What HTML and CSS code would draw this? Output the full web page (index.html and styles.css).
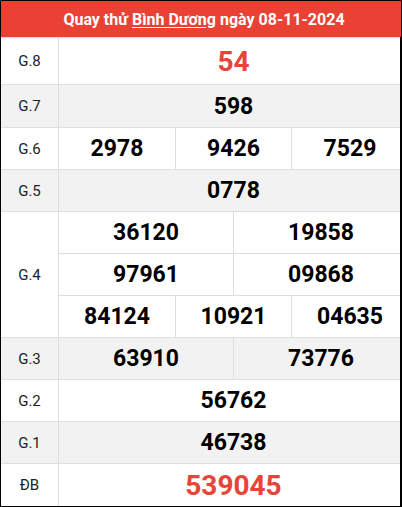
FILE: index.html
```html
<!DOCTYPE html>
<html lang="vi">
<head>
<meta charset="utf-8">
<link rel="stylesheet" href="styles.css">
</head>
<body>
<div class="board">
  <div class="title">Quay thử <span class="u">Bình Dương</span> ngày 08-11-2024</div>
  <div class="grid">
    <div class="lbl">G.8</div>
    <div class="val full red big">54</div>

    <div class="lbl alt">G.7</div>
    <div class="val full alt">598</div>

    <div class="lbl">G.6</div>
    <div class="val t1">2978</div>
    <div class="val t2">9426</div>
    <div class="val t3">7529</div>

    <div class="lbl alt">G.5</div>
    <div class="val full alt">0778</div>

    <div class="lbl g4">G.4</div>
    <div class="val h1">36120</div>
    <div class="val h2">19858</div>
    <div class="val h1">97961</div>
    <div class="val h2">09868</div>
    <div class="val t1">84124</div>
    <div class="val t2">10921</div>
    <div class="val t3">04635</div>

    <div class="lbl alt">G.3</div>
    <div class="val h1 alt">63910</div>
    <div class="val h2 alt">73776</div>

    <div class="lbl">G.2</div>
    <div class="val full">56762</div>

    <div class="lbl alt">G.1</div>
    <div class="val full alt">46738</div>

    <div class="lbl">ĐB</div>
    <div class="val full red big">539045</div>
  </div>
</div>
</body>
</html>
```
FILE: styles.css
```css
* { box-sizing: border-box; }
html, body { margin: 0; padding: 0; background: #fff; }
.board {
  width: 402px;
  height: 507px;
  border: 1px solid #000;
  font-family: Roboto, "Liberation Sans", Arial, sans-serif;
  overflow: hidden;
}
.title {
  height: 36px;
  padding-left: 6px;
  background: #e94235;
  color: #fff;
  font-weight: 700;
  font-size: 16px;
  display: flex;
  align-items: center;
  justify-content: center;
}
.u { text-decoration: underline; text-underline-offset: 2px; margin: 0 4px; }
.grid {
  display: grid;
  grid-template-columns: 57px 58px 57px 57px 57px 54px 53px;
  grid-template-rows: 46px 42px 41px 41px 41px 41px 41px 41px 41px 41px 42px;
  gap: 1px;
  padding-top: 1px;
  background: #dedede;
  border-right: 1px solid #000;
}
.grid > div {
  background: #fff;
  display: flex;
  align-items: center;
  justify-content: center;
}
.grid > .alt { background: #f2f2f2; }
.lbl {
  grid-column: 1;
  font-size: 15px;
  color: #222;
}
.g4 { grid-row: span 3; }
.val {
  font-size: 23px;
  font-weight: 700;
  color: #000;
}
.full { grid-column: 2 / 8; padding-left: 8px; }
.t1 { grid-column: 2 / 4; }
.t2 { grid-column: 4 / 6; }
.t3 { grid-column: 6 / 8; padding-left: 8px; }
.h1 { grid-column: 2 / 5; }
.h2 { grid-column: 5 / 8; padding-left: 8px; }
.red { color: #e8443a; }
.big { font-size: 28px; }
```
